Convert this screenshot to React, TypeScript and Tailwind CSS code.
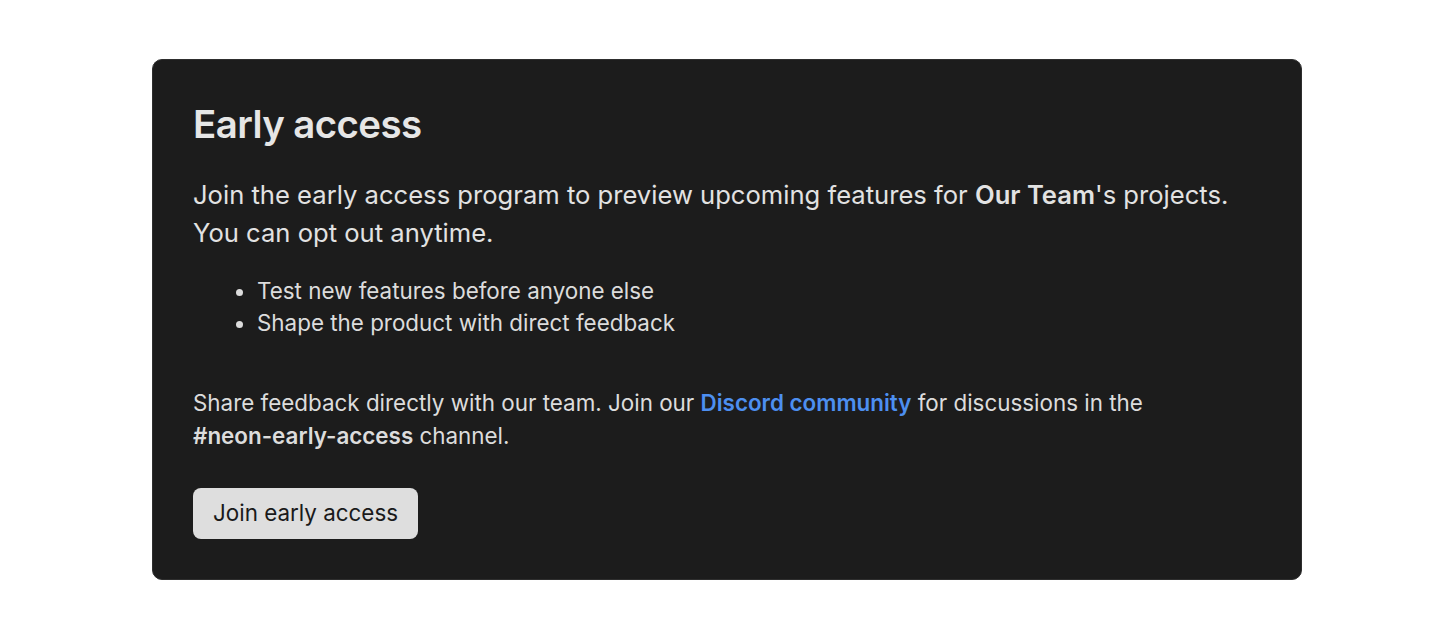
import React from "react";

export default function App() {
  return (
    <div className="flex min-h-screen w-full items-center justify-center bg-white" style={{ fontFamily: "Inter, 'Noto Sans', sans-serif" }}>
      <div className="w-[1150px] rounded-[10px] border border-[#2e2e2e] bg-[#1c1c1c] p-10 text-[#e2e2e2]">
        <h1 className="text-[38.4px] font-semibold leading-[48px] tracking-[-0.015em] text-[#e6e6e6]">Early access</h1>
        <p className="mt-[28px] text-[25.6px] leading-[38px] text-[#e2e2e2]">
          Join the early access program to preview upcoming features for <strong className="font-semibold">Our Team</strong>'s projects. You can opt out anytime.
        </p>
        <ul className="mt-[23px] list-disc pl-[64px] text-[22.4px] leading-[32px] text-[#dcdcdc]">
          <li>Test new features before anyone else</li>
          <li>Shape the product with direct feedback</li>
        </ul>
        <p className="mt-[47px] text-[22.4px] leading-[33px] text-[#dcdcdc]">
          Share feedback directly with our team. Join our <a className="font-semibold text-[#4d8ff0]">Discord community</a> for discussions in the <strong className="whitespace-nowrap font-semibold">#neon-early-access</strong> channel.
        </p>
        <button className="mt-[36px] h-[51px] rounded-[8px] bg-[#dedede] px-5 text-[22.4px] text-[#1a1a1a]">Join early access</button>
      </div>
    </div>
  );
}
